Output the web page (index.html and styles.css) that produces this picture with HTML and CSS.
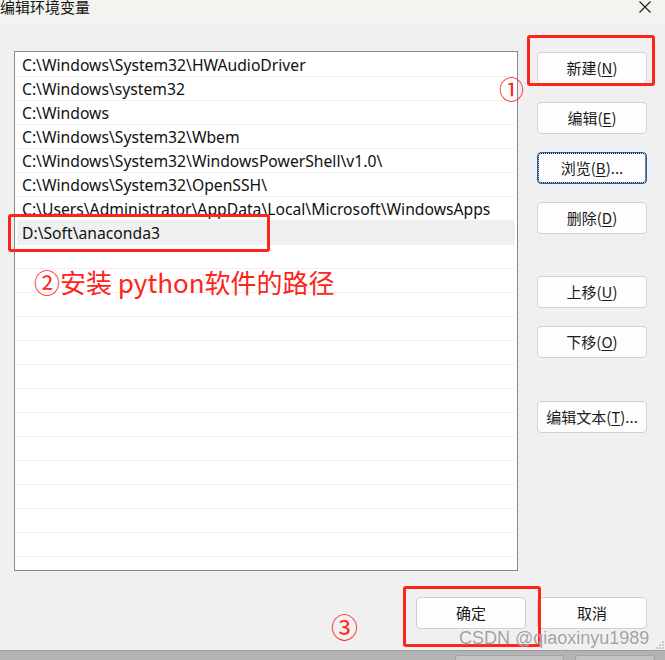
FILE: index.html
```html
<!DOCTYPE html>
<html lang="zh">
<head>
<meta charset="utf-8">
<title>编辑环境变量</title>
<link rel="stylesheet" href="styles.css">
</head>
<body>
<div class="window">
  <div class="titlebar">
    <span class="title">编辑环境变量</span>
    <svg class="close" width="12" height="12" viewBox="0 0 12 12"><path d="M0.5 0.5 L11.5 11.5 M11.5 0.5 L0.5 11.5" stroke="#1a1a1a" stroke-width="1.1" fill="none"/></svg>
  </div>
  <div class="content">
    <div class="list">
      <div class="row">C:\Windows\System32\HWAudioDriver</div>
      <div class="row">C:\Windows\system32</div>
      <div class="row">C:\Windows</div>
      <div class="row">C:\Windows\System32\Wbem</div>
      <div class="row">C:\Windows\System32\WindowsPowerShell\v1.0\</div>
      <div class="row">C:\Windows\System32\OpenSSH\</div>
      <div class="row">C:\Users\Administrator\AppData\Local\Microsoft\WindowsApps</div>
      <div class="row selected">D:\Soft\anaconda3</div>
      <div class="row"></div><div class="row"></div><div class="row"></div><div class="row"></div>
      <div class="row"></div><div class="row"></div><div class="row"></div><div class="row"></div>
      <div class="row"></div><div class="row"></div><div class="row"></div><div class="row"></div>
      <div class="row"></div><div class="row"></div>
    </div>
    <div class="side">
      <button class="btn">新建(<u>N</u>)</button>
      <button class="btn">编辑(<u>E</u>)</button>
      <button class="btn focus">浏览(<u>B</u>)...</button>
      <button class="btn">删除(<u>D</u>)</button>
      <button class="btn group">上移(<u>U</u>)</button>
      <button class="btn">下移(<u>O</u>)</button>
      <button class="btn group">编辑文本(<u>T</u>)...</button>
    </div>
  </div>
  <div class="footer">
    <button class="btn">确定</button>
    <button class="btn">取消</button>
  </div>
  <div class="strip">
    <div class="tab tab1"></div>
    <div class="tab tab2"></div>
  </div>

  <div class="mark box1"></div>
  <div class="mark box2"></div>
  <div class="mark box3"></div>
  <span class="num num1">①</span>
  <span class="note">②安装 python软件的路径</span>
  <span class="num num3">③</span>
  <span class="watermark">CSDN @qiaoxinyu1989</span>
  <svg class="grip" width="9" height="9" viewBox="0 0 9 9">
    <rect x="7" y="1" width="2" height="2" fill="#c9c9c9"/>
    <rect x="4" y="4" width="2" height="2" fill="#c9c9c9"/>
    <rect x="7" y="4" width="2" height="2" fill="#c9c9c9"/>
    <rect x="1" y="7" width="2" height="2" fill="#c9c9c9"/>
    <rect x="4" y="7" width="2" height="2" fill="#c9c9c9"/>
    <rect x="7" y="7" width="2" height="2" fill="#c9c9c9"/>
  </svg>
</div>
</body>
</html>
```
FILE: styles.css
```css
* { box-sizing: border-box; }
html, body { margin: 0; padding: 0; }
body {
  width: 665px;
  height: 660px;
  overflow: hidden;
  background: #f0f0f0;
  font-family: "Noto Sans", "Noto Sans CJK SC", sans-serif;
  color: #1a1a1a;
}
.window {
  position: relative;
  width: 665px;
  height: 660px;
  display: flex;
  flex-direction: column;
}
.titlebar {
  height: 25px;
  background: #f3f3f0;
  display: flex;
  align-items: flex-start;
  justify-content: space-between;
  padding: 0 14px 0 0;
}
.title {
  font-family: "Noto Sans CJK SC", sans-serif;
  font-size: 15px;
  line-height: 14px;
  color: #111;
}
.close { margin-top: 1px; }
.content {
  display: flex;
  align-items: flex-start;
  padding: 26px 0 0 14px;
}
.list {
  width: 504px;
  height: 520px;
  border: 1px solid #868a8e;
  background: #fff;
  padding: 1px 2px 0 2px;
  overflow: hidden;
}
.row {
  height: 24px;
  border-bottom: 1px solid #efefef;
  padding-left: 5px;
  font-size: 15.7px;
  line-height: 24px;
  white-space: nowrap;
  color: #111;
}
.row.selected { background: #f0f0f0; }
.side {
  margin: 1px 0 0 19px;
  display: flex;
  flex-direction: column;
  gap: 18px;
}
.btn {
  width: 110px;
  height: 32px;
  padding: 0;
  background: #fdfdfd;
  border: 1px solid #d0d0d0;
  border-radius: 4px;
  font-family: "Noto Sans CJK SC", sans-serif;
  font-size: 15px;
  color: #1a1a1a;
  line-height: 30px;
}
.btn u { text-underline-offset: 2px; }
.btn.focus {
  border-color: #1f62c4;
  outline: 1px dotted #000;
  outline-offset: -2px;
}
.side .btn.group { margin-top: 24px; }
.side .btn:last-child { margin-top: 25px; }
.footer {
  display: flex;
  justify-content: flex-end;
  gap: 11px;
  padding: 26px 18px 0 0;
}
.strip {
  margin-top: 21px;
  height: 10px;
  background: #b3b3b3;
  border-top: 1px solid #9c9c9c;
  display: flex;
  padding: 4px 0 0 455px;
  gap: 11px;
}
.tab {
  height: 8px;
  background: #c2c2c2;
  border: 1px solid #a3a3a3;
  border-bottom: none;
  border-radius: 3px 3px 0 0;
}
.tab1 { width: 109px; }
.tab2 { width: 80px; }

.mark {
  position: absolute;
  border: 3px solid #fe2419;
  border-radius: 3px;
}
.box1 { left: 527px; top: 35px; width: 128px; height: 51px; }
.box2 { left: 8px; top: 214px; width: 262px; height: 38px; }
.box3 { left: 403px; top: 586px; width: 138px; height: 61px; }
.num, .note {
  position: absolute;
  color: #fe2419;
  font-family: "Noto Sans CJK SC", sans-serif;
  white-space: nowrap;
}
.num1 { left: 499px; top: 73px; font-size: 25px; line-height: 30px; }
.num3 { left: 331px; top: 612px; font-size: 27px; line-height: 30px; }
.note {
  left: 34px;
  top: 266px;
  font-size: 26px;
  line-height: 32px;
}
.watermark {
  position: absolute;
  left: 459px;
  top: 628px;
  font-family: "Liberation Sans", Arial, sans-serif;
  font-size: 18px;
  line-height: 20px;
  color: rgba(130, 130, 130, 0.75);
  text-shadow: 0 0 1px #fff;
  white-space: nowrap;
}
.grip { position: absolute; left: 655px; top: 640px; }
```
